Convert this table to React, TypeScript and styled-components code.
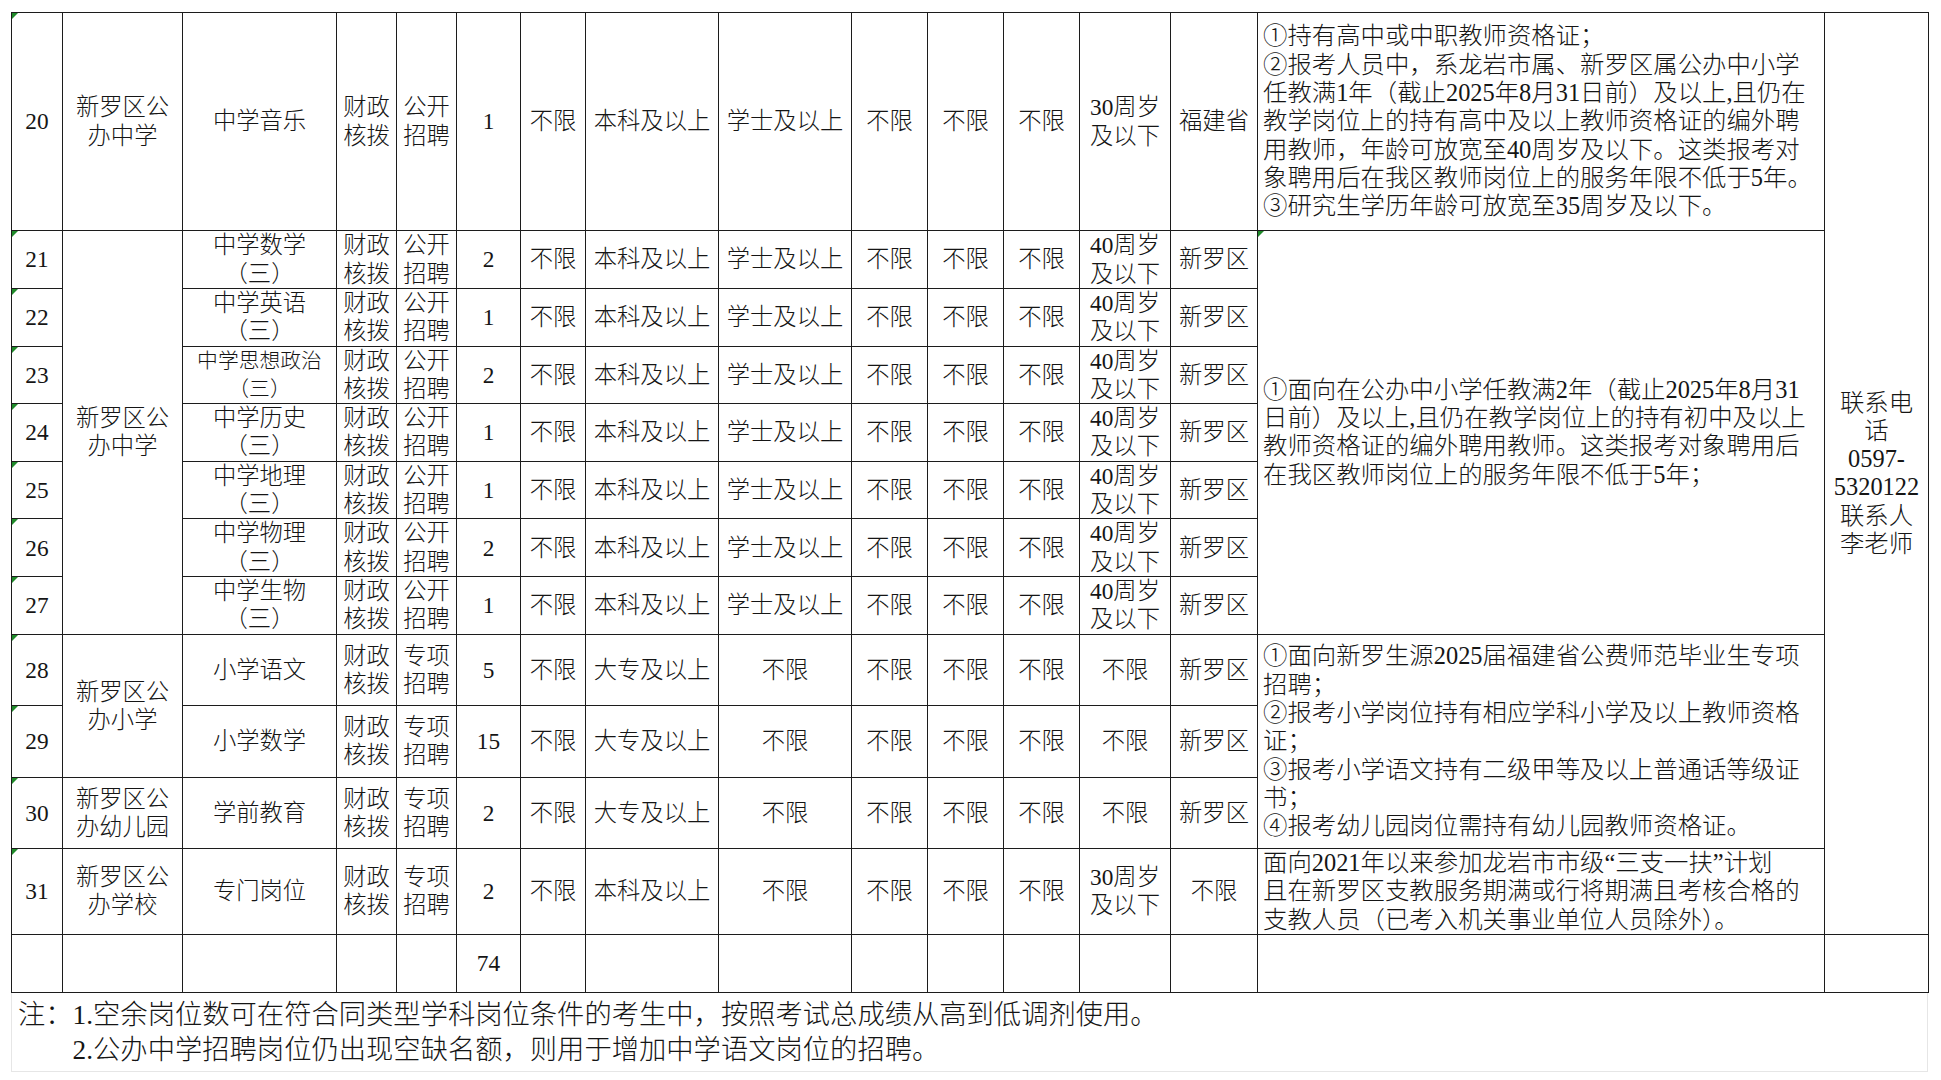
import React from 'react';
import styled, { createGlobalStyle } from 'styled-components';

type Span = { lines: string[]; span: number; flag?: boolean };

type RowData = {
  no: string;
  height: number;
  unit?: Span;
  post: string[];
  shrink?: boolean;
  method: string;
  count: string;
  edu: string;
  degree: string;
  age: string[];
  origin: string;
  remarks?: Span;
};

const GlobalStyle = createGlobalStyle`
  html, body {
    margin: 0;
    padding: 0;
    background: #ffffff;
  }
  body {
    font-family: "Liberation Serif", "Noto Sans CJK SC", serif;
    color: #151515;
  }
`;

const Page = styled.div`
  padding: 12px 0 0 11px;
  width: 1917px;
`;

const Sheet = styled.table`
  border-collapse: collapse;
  table-layout: fixed;
  width: 1917px;
  font-size: 23.3px;
  line-height: 28.3px;
  font-weight: 300;
`;

const Row = styled.tr<{ $h: number }>`
  height: ${(p) => p.$h}px;
`;

const Cell = styled.td<{ $left?: boolean; $flag?: boolean; $size?: number }>`
  position: relative;
  border: 1px solid #1c1c1c;
  padding: ${(p) => (p.$left ? '0 0 0 5px' : '0 3px')};
  text-align: ${(p) => (p.$left ? 'left' : 'center')};
  vertical-align: middle;
  white-space: nowrap;
  overflow: hidden;
  ${(p) => (p.$size ? `font-size: ${p.$size}px;` : '')}

  &::before {
    content: '';
    display: ${(p) => (p.$flag ? 'block' : 'none')};
    position: absolute;
    left: 0;
    top: 0;
    width: 0;
    height: 0;
    border-top: 6px solid #1f8a2a;
    border-right: 6px solid transparent;
  }
`;

const Notes = styled.div`
  box-sizing: border-box;
  width: 1917px;
  height: 79px;
  padding: 5px 6px 0;
  border: 1px solid #e6e6e6;
  border-top: none;
  font-size: 27.3px;
  line-height: 35px;
  font-weight: 300;
`;

const NoteLine = styled.div<{ $indent?: boolean }>`
  padding-left: ${(p) => (p.$indent ? '2em' : '0')};
  white-space: nowrap;
`;

const Lines = ({ text }: { text: string[] }) => (
  <>
    {text.map((t, i) => (
      <React.Fragment key={i}>
        {i > 0 && <br />}
        {t}
      </React.Fragment>
    ))}
  </>
);

const widths = [51, 120, 154, 60, 60, 64, 65, 133, 133, 76, 76, 76, 91, 87, 567, 104];
const remarkSize = 24.4;

const rows: RowData[] = [
  {
    no: '20', height: 218,
    unit: { lines: ['新罗区公', '办中学'], span: 1 },
    post: ['中学音乐'], method: '公开', count: '1', edu: '本科及以上', degree: '学士及以上',
    age: ['30周岁', '及以下'], origin: '福建省',
    remarks: {
      span: 1,
      lines: [
        '①持有高中或中职教师资格证；',
        '②报考人员中，系龙岩市属、新罗区属公办中小学',
        '任教满1年（截止2025年8月31日前）及以上,且仍在',
        '教学岗位上的持有高中及以上教师资格证的编外聘',
        '用教师，年龄可放宽至40周岁及以下。这类报考对',
        '象聘用后在我区教师岗位上的服务年限不低于5年。',
        '③研究生学历年龄可放宽至35周岁及以下。',
      ],
    },
  },
  {
    no: '21', height: 58,
    unit: { lines: ['新罗区公', '办中学'], span: 7 },
    post: ['中学数学', '（三）'], method: '公开', count: '2', edu: '本科及以上', degree: '学士及以上',
    age: ['40周岁', '及以下'], origin: '新罗区',
    remarks: {
      span: 7, flag: true,
      lines: [
        '①面向在公办中小学任教满2年（截止2025年8月31',
        '日前）及以上,且仍在教学岗位上的持有初中及以上',
        '教师资格证的编外聘用教师。这类报考对象聘用后',
        '在我区教师岗位上的服务年限不低于5年；',
      ],
    },
  },
  { no: '22', height: 57, post: ['中学英语', '（三）'], method: '公开', count: '1', edu: '本科及以上', degree: '学士及以上', age: ['40周岁', '及以下'], origin: '新罗区' },
  { no: '23', height: 57, post: ['中学思想政治', '（三）'], shrink: true, method: '公开', count: '2', edu: '本科及以上', degree: '学士及以上', age: ['40周岁', '及以下'], origin: '新罗区' },
  { no: '24', height: 57, post: ['中学历史', '（三）'], method: '公开', count: '1', edu: '本科及以上', degree: '学士及以上', age: ['40周岁', '及以下'], origin: '新罗区' },
  { no: '25', height: 57, post: ['中学地理', '（三）'], method: '公开', count: '1', edu: '本科及以上', degree: '学士及以上', age: ['40周岁', '及以下'], origin: '新罗区' },
  { no: '26', height: 57, post: ['中学物理', '（三）'], method: '公开', count: '2', edu: '本科及以上', degree: '学士及以上', age: ['40周岁', '及以下'], origin: '新罗区' },
  { no: '27', height: 58, post: ['中学生物', '（三）'], method: '公开', count: '1', edu: '本科及以上', degree: '学士及以上', age: ['40周岁', '及以下'], origin: '新罗区' },
  {
    no: '28', height: 71,
    unit: { lines: ['新罗区公', '办小学'], span: 2 },
    post: ['小学语文'], method: '专项', count: '5', edu: '大专及以上', degree: '不限',
    age: ['不限'], origin: '新罗区',
    remarks: {
      span: 3,
      lines: [
        '①面向新罗生源2025届福建省公费师范毕业生专项',
        '招聘；',
        '②报考小学岗位持有相应学科小学及以上教师资格',
        '证；',
        '③报考小学语文持有二级甲等及以上普通话等级证',
        '书；',
        '④报考幼儿园岗位需持有幼儿园教师资格证。',
      ],
    },
  },
  { no: '29', height: 72, post: ['小学数学'], method: '专项', count: '15', edu: '大专及以上', degree: '不限', age: ['不限'], origin: '新罗区' },
  {
    no: '30', height: 71,
    unit: { lines: ['新罗区公', '办幼儿园'], span: 1 },
    post: ['学前教育'], method: '专项', count: '2', edu: '大专及以上', degree: '不限',
    age: ['不限'], origin: '新罗区',
  },
  {
    no: '31', height: 86,
    unit: { lines: ['新罗区公', '办学校'], span: 1 },
    post: ['专门岗位'], method: '专项', count: '2', edu: '本科及以上', degree: '不限',
    age: ['30周岁', '及以下'], origin: '不限',
    remarks: {
      span: 1,
      lines: [
        '面向2021年以来参加龙岩市市级“三支一扶”计划',
        '且在新罗区支教服务期满或行将期满且考核合格的',
        '支教人员（已考入机关事业单位人员除外）。',
      ],
    },
  },
];

const App = () => {
  return (
    <Page>
      <GlobalStyle />
      <Sheet>
        <colgroup>
          {widths.map((w, i) => (
            <col key={i} style={{ width: w }} />
          ))}
        </colgroup>
        <tbody>
          {rows.map((r, i) => (
            <Row key={r.no} $h={r.height}>
              <Cell $flag>{r.no}</Cell>
              {r.unit && (
                <Cell rowSpan={r.unit.span}>
                  <Lines text={r.unit.lines} />
                </Cell>
              )}
              <Cell $size={r.shrink ? 20.8 : undefined}>
                <Lines text={r.post} />
              </Cell>
              <Cell>
                <Lines text={['财政', '核拨']} />
              </Cell>
              <Cell>
                <Lines text={[r.method, '招聘']} />
              </Cell>
              <Cell>{r.count}</Cell>
              <Cell>不限</Cell>
              <Cell>{r.edu}</Cell>
              <Cell>{r.degree}</Cell>
              <Cell>不限</Cell>
              <Cell>不限</Cell>
              <Cell>不限</Cell>
              <Cell>
                <Lines text={r.age} />
              </Cell>
              <Cell>{r.origin}</Cell>
              {r.remarks && (
                <Cell $left $flag={r.remarks.flag} $size={remarkSize} rowSpan={r.remarks.span}>
                  <Lines text={r.remarks.lines} />
                </Cell>
              )}
              {i === 0 && (
                <Cell $size={remarkSize} rowSpan={rows.length}>
                  <Lines text={['联系电', '话', '0597-', '5320122', '联系人', '李老师']} />
                </Cell>
              )}
            </Row>
          ))}
          <Row $h={58}>
            <Cell />
            <Cell />
            <Cell />
            <Cell />
            <Cell />
            <Cell>74</Cell>
            <Cell />
            <Cell />
            <Cell />
            <Cell />
            <Cell />
            <Cell />
            <Cell />
            <Cell />
            <Cell />
            <Cell />
          </Row>
        </tbody>
      </Sheet>
      <Notes>
        <NoteLine>注：1.空余岗位数可在符合同类型学科岗位条件的考生中，按照考试总成绩从高到低调剂使用。</NoteLine>
        <NoteLine $indent>2.公办中学招聘岗位仍出现空缺名额，则用于增加中学语文岗位的招聘。</NoteLine>
      </Notes>
    </Page>
  );
};

export default App;
